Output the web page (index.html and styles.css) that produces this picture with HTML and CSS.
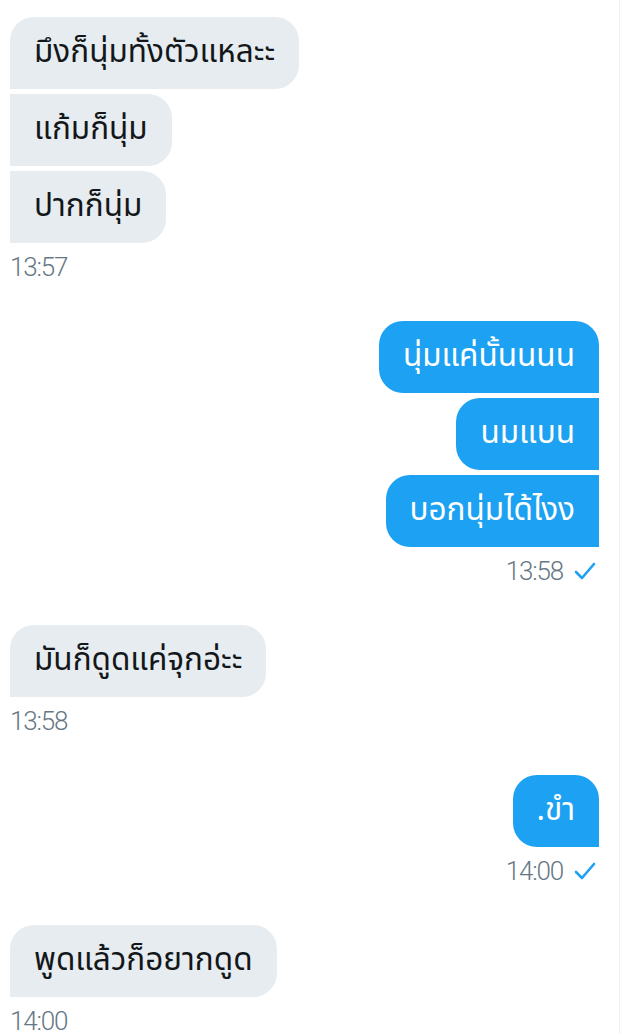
FILE: index.html
```html
<!DOCTYPE html>
<html lang="th">
<head>
<meta charset="utf-8">
<link rel="stylesheet" href="styles.css">
</head>
<body>
<div class="chat">
  <div class="group in">
    <div class="bubble">มึงก็นุ่มทั้งตัวแหละะ</div>
    <div class="bubble">แก้มก็นุ่ม</div>
    <div class="bubble">ปากก็นุ่ม</div>
    <div class="meta">13:57</div>
  </div>
  <div class="group out">
    <div class="bubble">นุ่มแค่นั้นนนน</div>
    <div class="bubble">นมแบน</div>
    <div class="bubble">บอกนุ่มได้ไงง</div>
    <div class="meta">13:58 <svg class="tick" viewBox="0 0 24 20" width="24" height="20"><polyline points="3,11 9,17 21,3" fill="none" stroke="#1da1f2" stroke-width="2.6" stroke-linecap="round" stroke-linejoin="round"/></svg></div>
  </div>
  <div class="group in">
    <div class="bubble">มันก็ดูดแค่จุกอ่ะะ</div>
    <div class="meta">13:58</div>
  </div>
  <div class="group out">
    <div class="bubble">.ขำ</div>
    <div class="meta">14:00 <svg class="tick" viewBox="0 0 24 20" width="24" height="20"><polyline points="3,11 9,17 21,3" fill="none" stroke="#1da1f2" stroke-width="2.6" stroke-linecap="round" stroke-linejoin="round"/></svg></div>
  </div>
  <div class="group in">
    <div class="bubble">พูดแล้วก็อยากดูด</div>
    <div class="meta">14:00</div>
  </div>
</div>
</body>
</html>
```
FILE: styles.css
```css
html, body {
  margin: 0;
  padding: 0;
  background: #ffffff;
}
body {
  font-family: "Noto Sans Thai", "Noto Sans", "DejaVu Sans", sans-serif;
}
.chat {
  width: 620px;
  height: 1034px;
  overflow: hidden;
  box-sizing: border-box;
  border-right: 1px solid #eef1f3;
  padding: 17px 20px 0 10px;
  display: flex;
  flex-direction: column;
  gap: 41px;
}
.group {
  display: flex;
  flex-direction: column;
  gap: 5px;
}
.group.in { align-items: flex-start; }
.group.out { align-items: flex-end; }
.bubble {
  height: 72px;
  box-sizing: border-box;
  padding: 0 24px;
  display: flex;
  align-items: center;
  font-size: 31.5px;
  line-height: 1;
  border-radius: 24px;
  white-space: nowrap;
}
.in .bubble {
  background: #e6ecf0;
  color: #14171a;
  border-bottom-left-radius: 0;
}
.in .bubble + .bubble { border-top-left-radius: 0; }
.out .bubble {
  background: #1da1f2;
  color: #ffffff;
  border-bottom-right-radius: 0;
}
.out .bubble + .bubble { border-top-right-radius: 0; }
.meta {
  margin-top: 6px;
  display: flex;
  align-items: center;
  gap: 10px;
  font-family: Roboto, "Liberation Sans", sans-serif;
  font-weight: 300;
  font-size: 26px;
  line-height: 26px;
  color: #657786;
  letter-spacing: -1.2px;
}
.out .meta { padding-right: 2px; }
.tick { display: block; }
```
